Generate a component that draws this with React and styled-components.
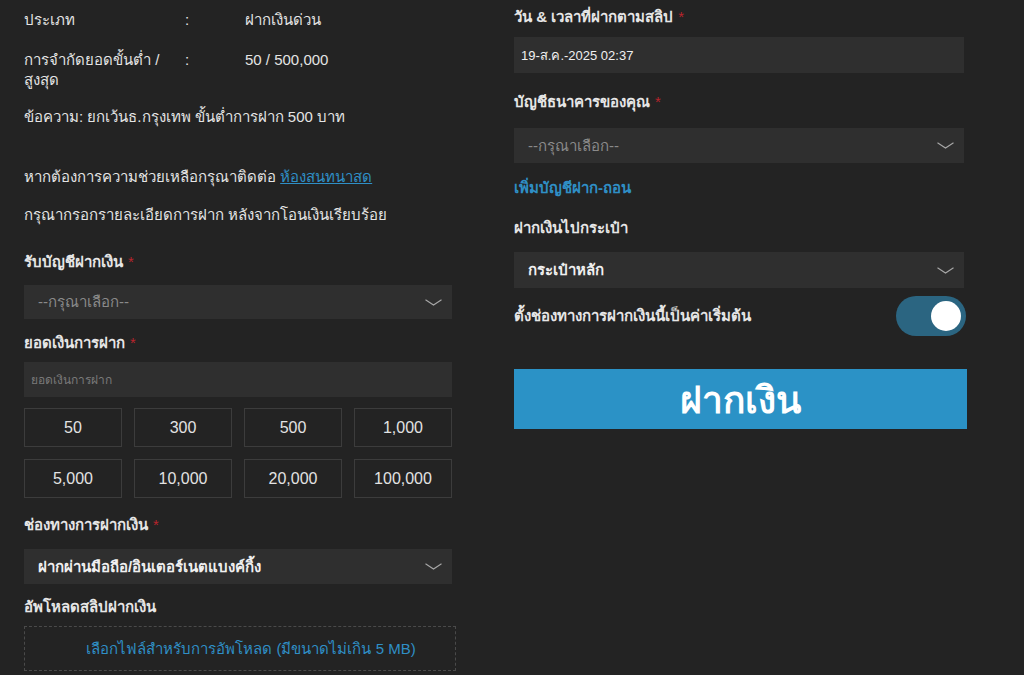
import styled, { createGlobalStyle } from 'styled-components';

const GlobalStyle = createGlobalStyle`
  html, body {
    margin: 0;
    padding: 0;
    background: #232323;
  }
  body {
    font-family: "Liberation Sans", "Noto Sans", sans-serif;
    font-size: 15px;
    color: #e4e4e4;
  }
`;

const Page = styled.div`
  display: flex;
  gap: 62px;
  padding: 7px 0 0 24px;
  width: 1024px;
  height: 675px;
  box-sizing: border-box;
  overflow: hidden;
`;

const Column = styled.div`
  width: ${p => p.$w}px;
  display: flex;
  flex-direction: column;
  padding-top: ${p => p.$top || 0}px;
`;

const InfoRow = styled.div`
  display: grid;
  grid-template-columns: 161px 60px 1fr;
  line-height: 20px;
  margin-top: ${p => p.$mt || 0}px;
`;

const Text = styled.div`
  line-height: 20px;
  margin-top: ${p => p.$mt || 0}px;
`;

const Link = styled.a`
  color: #2f8fc6;
  text-decoration: underline;
  cursor: pointer;
`;

const PlainLink = styled.div`
  color: #2f8fc6;
  line-height: 20px;
  font-weight: 600;
  margin-top: ${p => p.$mt || 0}px;
`;

const Label = styled.div`
  line-height: 20px;
  font-weight: 600;
  color: #e6e6e6;
  margin-top: ${p => p.$mt || 0}px;
`;

const Star = styled.span`
  color: #b8232c;
  margin-left: 5px;
  font-weight: 400;
`;

const Select = styled.div`
  display: flex;
  align-items: center;
  justify-content: space-between;
  height: ${p => p.$h || 35}px;
  background: #2f2f2f;
  padding: 0 10px 0 14px;
  margin-top: ${p => p.$mt || 0}px;
  color: ${p => (p.$placeholder ? '#8a8a8a' : '#f0f0f0')};
  font-weight: ${p => (p.$placeholder ? 400 : 700)};
  box-sizing: border-box;
`;

const Input = styled.div`
  display: flex;
  align-items: center;
  height: ${p => p.$h || 35}px;
  background: #2f2f2f;
  padding: 0 ${p => p.$pl || 7}px;
  margin-top: ${p => p.$mt || 0}px;
  color: ${p => (p.$placeholder ? '#7a7a7a' : '#f0f0f0')};
  font-size: ${p => p.$fs || 15}px;
  box-sizing: border-box;
`;

const AmountGrid = styled.div`
  display: grid;
  grid-template-columns: repeat(4, 1fr);
  column-gap: 12px;
  row-gap: 12px;
  margin-top: 11px;
`;

const AmountButton = styled.div`
  height: 39px;
  display: flex;
  align-items: center;
  justify-content: center;
  border: 1px solid #3c3c3c;
  box-sizing: border-box;
  font-size: 16px;
  color: #e2e2e2;
`;

const Upload = styled.div`
  height: 45px;
  width: 432px;
  margin-top: 9px;
  padding-left: 22px;
  border: 1px dashed #4a4a4a;
  display: flex;
  align-items: center;
  justify-content: center;
  color: #2f8fc6;
  font-size: 15px;
  box-sizing: border-box;
`;

const ToggleRow = styled.div`
  display: flex;
  align-items: center;
  justify-content: space-between;
  margin-top: 8px;
  height: 40px;
`;

const Toggle = styled.div`
  width: 70px;
  height: 40px;
  border-radius: 20px;
  background: #2b6581;
  position: relative;
  margin-right: -2px;
`;

const Knob = styled.span`
  position: absolute;
  right: 5px;
  top: 5px;
  width: 30px;
  height: 30px;
  border-radius: 50%;
  background: #fff;
`;

const SubmitButton = styled.button`
  margin-top: 33px;
  height: 60px;
  width: 453px;
  border: none;
  background: #2b92c6;
  color: #fff;
  font-family: inherit;
  font-size: 37px;
  font-weight: 700;
  cursor: pointer;
`;

const Chevron = () => (
  <svg width="17" height="7" viewBox="0 0 17 7" fill="none">
    <polyline points="0.5,0.8 8.5,6 16.5,0.8" stroke="#a8a8a8" strokeWidth="1.1" />
  </svg>
);

const amounts = ['50', '300', '500', '1,000', '5,000', '10,000', '20,000', '100,000'];

export default function App() {
  return (
    <>
      <GlobalStyle />
      <Page>
        <Column $w={428} $top={3}>
          <InfoRow>
            <span>ประเภท</span>
            <span>:</span>
            <span>ฝากเงินด่วน</span>
          </InfoRow>
          <InfoRow $mt={20}>
            <span>การจำกัดยอดขั้นต่ำ /<br />สูงสุด</span>
            <span>:</span>
            <span>50 / 500,000</span>
          </InfoRow>
          <Text $mt={17}>ข้อความ: ยกเว้นธ.กรุงเทพ ขั้นต่ำการฝาก 500 บาท</Text>
          <Text $mt={40}>
            หากต้องการความช่วยเหลือกรุณาติดต่อ <Link>ห้องสนทนาสด</Link>
          </Text>
          <Text $mt={18}>กรุณากรอกรายละเอียดการฝาก หลังจากโอนเงินเรียบร้อย</Text>

          <Label $mt={27}>รับบัญชีฝากเงิน<Star>*</Star></Label>
          <Select $mt={13} $h={34} $placeholder>
            <span>--กรุณาเลือก--</span>
            <Chevron />
          </Select>

          <Label $mt={14}>ยอดเงินการฝาก<Star>*</Star></Label>
          <Input $mt={9} $fs={12} $placeholder>ยอดเงินการฝาก</Input>

          <AmountGrid>
            {amounts.map(a => (
              <AmountButton key={a}>{a}</AmountButton>
            ))}
          </AmountGrid>

          <Label $mt={17}>ช่องทางการฝากเงิน<Star>*</Star></Label>
          <Select $mt={14}>
            <span>ฝากผ่านมือถือ/อินเตอร์เนตแบงค์กิ้ง</span>
            <Chevron />
          </Select>

          <Label $mt={13}>อัพโหลดสลิปฝากเงิน</Label>
          <Upload>เลือกไฟล์สำหรับการอัพโหลด (มีขนาดไม่เกิน 5 MB)</Upload>
        </Column>

        <Column $w={450}>
          <Label>วัน &amp; เวลาที่ฝากตามสลิป<Star>*</Star></Label>
          <Input $mt={10} $h={36} $fs={13}>19-ส.ค.-2025 02:37</Input>

          <Label $mt={19}>บัญชีธนาคารของคุณ<Star>*</Star></Label>
          <Select $mt={16} $placeholder>
            <span>--กรุณาเลือก--</span>
            <Chevron />
          </Select>

          <PlainLink $mt={15}>เพิ่มบัญชีฝาก-ถอน</PlainLink>

          <Label $mt={20}>ฝากเงินไปกระเป๋า</Label>
          <Select $mt={14} $h={36}>
            <span>กระเป๋าหลัก</span>
            <Chevron />
          </Select>

          <ToggleRow>
            <Label>ตั้งช่องทางการฝากเงินนี้เป็นค่าเริ่มต้น</Label>
            <Toggle>
              <Knob />
            </Toggle>
          </ToggleRow>

          <SubmitButton>ฝากเงิน</SubmitButton>
        </Column>
      </Page>
    </>
  );
}
